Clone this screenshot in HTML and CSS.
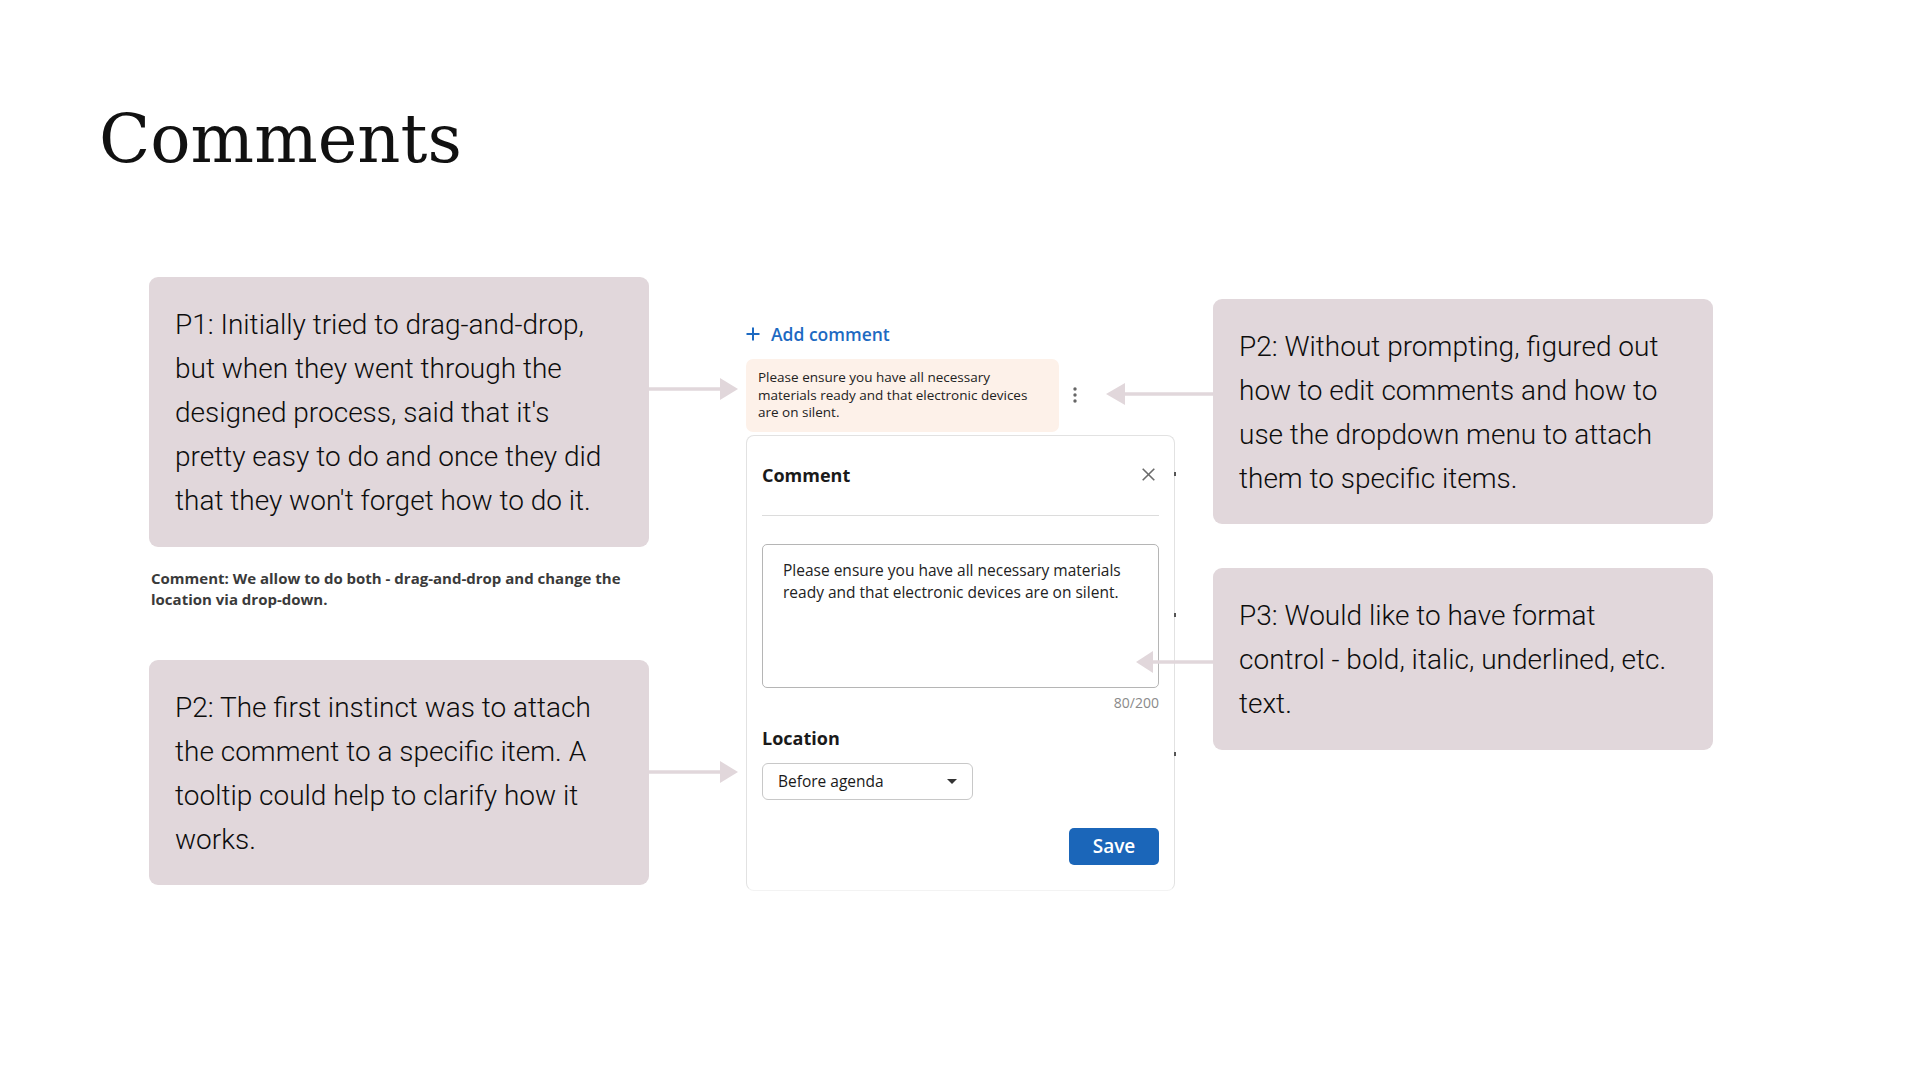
FILE: index.html
```html
<!DOCTYPE html>
<html lang="en">
<head>
<meta charset="utf-8">
<title>Comments</title>
<link rel="stylesheet" href="styles.css">
</head>
<body>
<div class="slide">
  <h1 class="title">Comments</h1>
  <div class="board">
    <div class="col col-left">
      <div class="note note-p1">
        P1: Initially tried to drag-and-drop, but when they went through the designed process, said that it's pretty easy to do and once they did that they won't forget how to do it.
        <svg class="arrow arrow-out" width="89" height="24" viewBox="0 0 89 24"><path d="M0 12H72" class="arrow-line"/><path d="M71 1L89 12L71 23Z" class="arrow-head"/></svg>
      </div>
      <p class="remark">Comment: We allow to do both - drag-and-drop and change the location via drop-down.</p>
      <div class="note note-p2">
        P2: The first instinct was to attach the comment to a specific item. A tooltip could help to clarify how it works.
        <svg class="arrow arrow-out" width="89" height="24" viewBox="0 0 89 24"><path d="M0 12H72" class="arrow-line"/><path d="M71 1L89 12L71 23Z" class="arrow-head"/></svg>
      </div>
    </div>

    <div class="col col-center">
      <div class="add-comment">
        <svg width="14" height="14" viewBox="0 0 14 14"><path d="M7 0.5V13.5M0.5 7H13.5" stroke="#1d6ac2" stroke-width="2" fill="none"/></svg>
        <span>Add comment</span>
      </div>
      <div class="comment-row">
        <div class="comment-card">Please ensure you have all necessary materials ready and that electronic devices are on silent.</div>
        <svg class="kebab" width="4" height="16" viewBox="0 0 4 16"><circle cx="2" cy="2" r="1.7"/><circle cx="2" cy="8" r="1.7"/><circle cx="2" cy="14" r="1.7"/></svg>
      </div>
      <div class="panel">
        <div class="panel-head">
          <span class="panel-title">Comment</span>
          <svg class="close" width="13" height="13" viewBox="0 0 13 13"><path d="M0.7 0.7L12.3 12.3M12.3 0.7L0.7 12.3" stroke="#6b6b6b" stroke-width="1.6" fill="none"/></svg>
        </div>
        <div class="divider"></div>
        <div class="textarea">Please ensure you have all necessary materials ready and that electronic devices are on silent.</div>
        <div class="counter">80/200</div>
        <div class="field-label">Location</div>
        <div class="select">
          <span>Before agenda</span>
          <svg width="10" height="5" viewBox="0 0 10 5"><path d="M0 0H10L5 5Z" fill="#333"/></svg>
        </div>
        <div class="actions"><span class="save">Save</span></div>
      </div>
    </div>

    <div class="col col-right">
      <div class="note note-r1">
        P2: Without prompting, figured out how to edit comments and how to use the dropdown menu to attach them to specific items.
        <svg class="arrow arrow-in arrow-in-1" width="107" height="24" viewBox="0 0 107 24"><path d="M16 12H107" class="arrow-line"/><path d="M0 12L19 1V23Z" class="arrow-head"/></svg>
      </div>
      <div class="note note-r2">
        P3: Would like to have format control - bold, italic, underlined, etc. text.
        <svg class="arrow arrow-in arrow-in-2" width="77" height="24" viewBox="0 0 77 24"><path d="M14 12H77" class="arrow-line"/><path d="M0 12L17 1V23Z" class="arrow-head"/></svg>
      </div>
    </div>
  </div>
</div>
</body>
</html>
```

FILE: styles.css
```css
* { box-sizing: border-box; }

html, body {
  margin: 0;
  background: #ffffff;
}

.slide {
  width: 1920px;
  height: 1080px;
  padding-top: 106px;
  overflow: hidden;
}

.title {
  margin: 0;
  padding-left: 99px;
  font: 400 67px/67px "DejaVu Serif", serif;
  color: #111111;
}

.board {
  display: flex;
  align-items: flex-start;
  margin-top: 104px;
  padding-left: 149px;
}

.col { display: flex; flex-direction: column; }

.col-left { width: 500px; }

.note {
  position: relative;
  background: #e1d7db;
  border-radius: 9px;
  color: #0d0d0d;
  font: 300 28px/44px Roboto, "Noto Sans", sans-serif;
}

.note-p1 { height: 270px; padding: 26px 26px 24px; }
.note-p2 { height: 225px; padding: 26px 26px 23px; margin-top: 50px; }

.remark {
  margin: 21px 0 0 2px;
  font: 700 15px/21px "Open Sans", sans-serif;
  color: #3a3a3a;
}

.arrow { position: absolute; }
.arrow-line { stroke: #e1d7db; stroke-width: 3.5; fill: none; }
.arrow-head { fill: #e1d7db; }
.arrow-out { left: 100%; top: 100px; }
.arrow-in { right: 100%; }
.arrow-in-1 { top: 83px; }
.arrow-in-2 { top: 82px; }

.col-center { width: 429px; margin-left: 97px; margin-top: 45px; }

.add-comment {
  display: flex;
  align-items: center;
  gap: 11px;
  height: 24px;
  font: 600 17.5px/24px "Open Sans", sans-serif;
  color: #1d6ac2;
}

.comment-row {
  display: flex;
  align-items: center;
  margin-top: 13px;
}

.comment-card {
  width: 313px;
  padding: 10px 16px 10px 12px;
  background: #fdf1e9;
  border-radius: 7px;
  font: 400 13.5px/17.5px "Open Sans", sans-serif;
  color: #222222;
}

.kebab { margin-left: 14px; fill: #666666; }

.panel {
  position: relative;
  margin-top: 3px;
  height: 456px;
  border: 1px solid #e2e2e2;
  border-bottom-color: #f3f3f3;
  border-radius: 8px;
  padding: 27px 15px 25px;
  display: flex;
  flex-direction: column;
}

.panel::after {
  content: "";
  position: absolute;
  right: -2px;
  top: 36px;
  width: 2px;
  height: 4px;
  background: #555555;
  box-shadow: 0 141px #555555, 0 280px #555555;
}

.panel-head {
  display: flex;
  justify-content: space-between;
  align-items: center;
  height: 24px;
}

.panel-title {
  font: 700 18px/24px "Open Sans", sans-serif;
  color: #1a1a1a;
}

.close { margin-right: 4px; }

.divider {
  margin-top: 28px;
  height: 1px;
  background: #dcdcdc;
}

.textarea {
  margin-top: 28px;
  height: 144px;
  border: 1px solid #b5b5b5;
  border-radius: 5px;
  padding: 14px 20px;
  font: 400 15.5px/22px "Open Sans", sans-serif;
  color: #222222;
}

.counter {
  margin-top: 5px;
  text-align: right;
  font: 400 14px/20px "Open Sans", sans-serif;
  color: #8a8a8a;
}

.field-label {
  margin-top: 13px;
  font: 700 18px/24px "Open Sans", sans-serif;
  color: #1a1a1a;
}

.select {
  margin-top: 13px;
  width: 211px;
  height: 37px;
  border: 1px solid #c8c8c8;
  border-radius: 6px;
  display: flex;
  align-items: center;
  justify-content: space-between;
  padding: 0 15px;
  font: 400 15.5px "Open Sans", sans-serif;
  color: #1a1a1a;
}

.actions {
  margin-top: 28px;
  display: flex;
  justify-content: flex-end;
}

.save {
  width: 90px;
  height: 37px;
  background: #1b66b9;
  color: #ffffff;
  border-radius: 5px;
  font: 600 19px "Open Sans", sans-serif;
  display: flex;
  align-items: center;
  justify-content: center;
}

.col-right { width: 500px; margin-left: 38px; margin-top: 22px; }

.note-r1 { height: 225px; padding: 26px 26px 23px; }
.note-r2 { height: 182px; padding: 26px 26px 24px; margin-top: 44px; }
```
